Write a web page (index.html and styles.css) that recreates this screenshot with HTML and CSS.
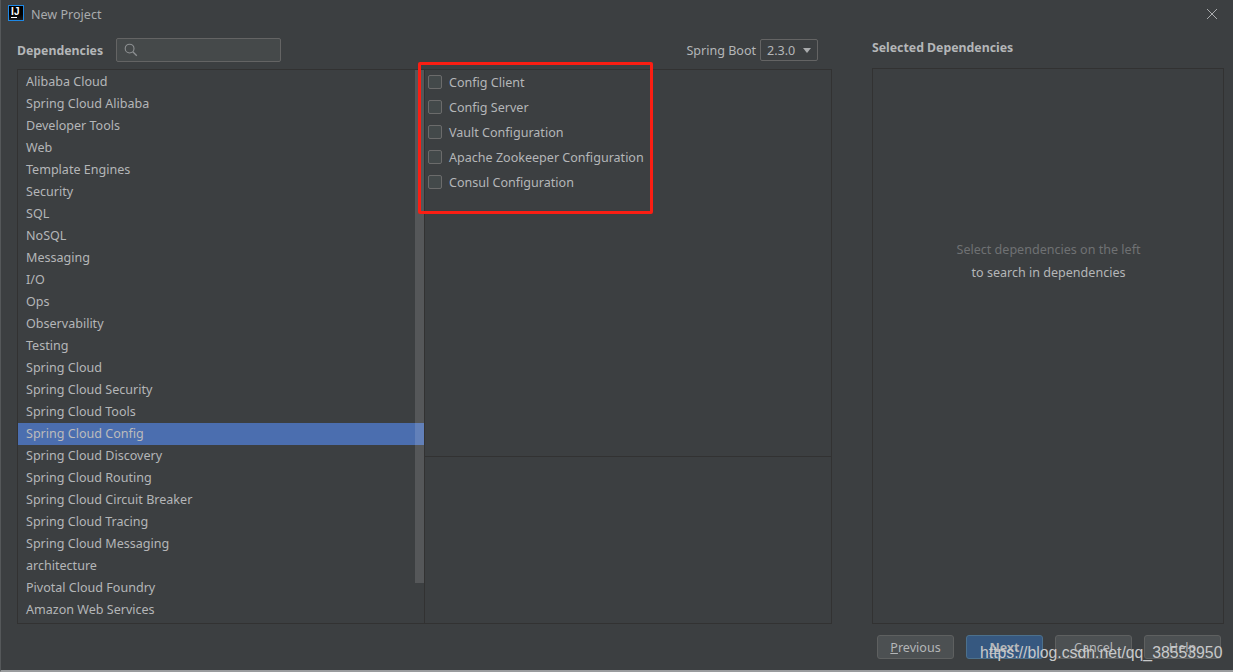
FILE: index.html
```html
<!DOCTYPE html>
<html lang="en">
<head>
<meta charset="utf-8">
<title>New Project</title>
<link rel="stylesheet" href="styles.css">
</head>
<body>
<div class="window">
  <header class="titlebar">
    <div class="logo"><span class="logo-text">IJ</span><span class="logo-bar"></span></div>
    <span class="title">New Project</span>
    <svg class="close" width="12" height="12" viewBox="0 0 12 12"><path d="M1 1l10 10M11 1L1 11" stroke="#a9abad" stroke-width="1" fill="none"/></svg>
  </header>
  <main class="content">
    <section class="left">
      <div class="toolbar">
        <strong class="heading deps-heading">Dependencies</strong>
        <div class="search">
          <svg width="14" height="14" viewBox="0 0 14 14"><circle cx="5.6" cy="5.6" r="4.4" stroke="#8d9092" stroke-width="1.1" fill="none"/><path d="M8.8 8.8l4 4" stroke="#8d9092" stroke-width="1.3" fill="none"/></svg>
        </div>
        <div class="boot">
          <span>Spring Boot</span>
          <div class="select"><span>2.3.0</span><i class="arrow"></i></div>
        </div>
      </div>
      <div class="panel">
        <div class="categories">
          <ul class="list">
            <li>Alibaba Cloud</li>
            <li>Spring Cloud Alibaba</li>
            <li>Developer Tools</li>
            <li>Web</li>
            <li>Template Engines</li>
            <li>Security</li>
            <li>SQL</li>
            <li>NoSQL</li>
            <li>Messaging</li>
            <li>I/O</li>
            <li>Ops</li>
            <li>Observability</li>
            <li>Testing</li>
            <li>Spring Cloud</li>
            <li>Spring Cloud Security</li>
            <li>Spring Cloud Tools</li>
            <li class="selected">Spring Cloud Config</li>
            <li>Spring Cloud Discovery</li>
            <li>Spring Cloud Routing</li>
            <li>Spring Cloud Circuit Breaker</li>
            <li>Spring Cloud Tracing</li>
            <li>Spring Cloud Messaging</li>
            <li>architecture</li>
            <li>Pivotal Cloud Foundry</li>
            <li>Amazon Web Services</li>
          </ul>
          <div class="scrollbar"></div>
        </div>
        <div class="detail">
          <div class="options">
            <label class="option"><i class="check"></i>Config Client</label>
            <label class="option"><i class="check"></i>Config Server</label>
            <label class="option"><i class="check"></i>Vault Configuration</label>
            <label class="option"><i class="check"></i>Apache Zookeeper Configuration</label>
            <label class="option"><i class="check"></i>Consul Configuration</label>
          </div>
          <div class="description"></div>
        </div>
      </div>
    </section>
    <aside class="right">
      <strong class="heading selected-heading">Selected Dependencies</strong>
      <div class="selected-panel">
        <p class="hint-dim">Select dependencies on the left</p>
        <p class="hint">to search in dependencies</p>
      </div>
      <footer class="buttons">
        <button class="btn"><span class="ul">P</span>revious</button>
        <button class="btn primary"><span class="ul">N</span>ext</button>
        <button class="btn">Cancel</button>
        <button class="btn">Help</button>
      </footer>
    </aside>
  </main>
</div>
<div class="annotation"></div>
<div class="watermark">https://blog.csdn.net/qq_38553950</div>
</body>
</html>
```
FILE: styles.css
```css
* { box-sizing: border-box; }
html, body { margin: 0; height: 100%; overflow: hidden; }
body {
  background: #3c3f41;
  color: #b4b6b8;
  font-family: "Noto Sans", "Open Sans", sans-serif;
  font-size: 12.55px;
  position: relative;
}
.window {
  width: 1233px;
  height: 672px;
  border-left: 1px solid #55585a;
  border-bottom: 2px solid #9a9c9e;
  display: flex;
  flex-direction: column;
}
.titlebar {
  height: 28px;
  display: flex;
  align-items: center;
  padding: 0 15px 0 7px;
}
.logo {
  width: 16px;
  height: 16px;
  margin-bottom: 2px;
  background: linear-gradient(#000 60%, #1a1a1a);
  border: 1px solid #1e88e5;
  color: #fff;
  margin-right: 7px;
}
.logo-text {
  display: block;
  font: bold 10px/9px "Liberation Sans", sans-serif;
  padding: 1px 0 0 2px;
  letter-spacing: 0.3px;
}
.logo-bar { display: block; width: 6px; height: 1px; background: #fff; margin: 1px 0 0 2px; }
.title { flex: 1; color: #a9abad; }
.content { flex: 1; display: flex; padding: 10px 9px 0 16px; min-height: 0; }
.left { width: 815px; display: flex; flex-direction: column; }
.toolbar { height: 31px; display: flex; align-items: center; padding-bottom: 7px; }
.heading { font-weight: 700; font-size: 12.3px; color: #b4b6b8; }
.deps-heading { width: 99px; }
.search {
  width: 165px;
  height: 24px;
  background: #45494a;
  border: 1px solid #646464;
  border-radius: 2px;
  display: flex;
  align-items: center;
  padding-left: 7px;
}
.boot { margin-left: auto; margin-right: 14px; display: flex; align-items: center; gap: 4px; }
.select {
  width: 58px;
  height: 22px;
  border: 1px solid #646464;
  border-radius: 2px;
  display: flex;
  align-items: center;
  padding-left: 6px;
  gap: 8px;
}
.arrow { width: 0; height: 0; border: 4.5px solid transparent; border-top: 5px solid #a9abad; border-bottom: 0; }
.panel { flex: 0 0 555px; display: flex; border: 1px solid #323232; }
.categories { width: 407px; border-right: 1px solid #323232; position: relative; }
.list { list-style: none; margin: 0; padding: 1px 0 0; }
.list li { height: 22px; line-height: 22px; padding-left: 8px; white-space: nowrap; }
.list li.selected { background: #4b6eaf; color: #bbbbbb; }
.scrollbar { position: absolute; right: 0; top: 0; width: 9px; height: 513px; background: rgba(255, 255, 255, 0.13); }
.detail { flex: 1; display: flex; flex-direction: column; }
.options { flex: 0 0 387px; border-bottom: 1px solid #323232; }
.option { display: flex; align-items: center; height: 25px; padding-left: 3px; }
.check {
  width: 14px;
  height: 14px;
  margin: 0 7px 2px 0;
  border: 1px solid #6b6b6b;
  border-radius: 2px;
  background: #43494a;
}
.description { flex: 1; }
.right { flex: 1; margin-left: 40px; display: flex; flex-direction: column; min-width: 0; }
.selected-heading { height: 30px; line-height: 20px; display: block; }
.selected-panel {
  height: 556px;
  border: 1px solid #323232;
  display: flex;
  flex-direction: column;
  align-items: center;
  padding: 169px 0 0 1px;
}
.selected-panel p { margin: 0; height: 23px; line-height: 23px; }
.hint-dim { color: #6f7173; }
.buttons { display: flex; gap: 12px; padding: 11px 2px 0 5px; }
.btn {
  width: 77px;
  height: 24px;
  padding: 0;
  font: inherit;
  color: #b4b6b8;
  background: #4c5052;
  border: 1px solid #5e6060;
  border-radius: 3px;
}
.btn.primary { background: #365880; border-color: #4c708c; font-weight: 700; }
.ul { text-decoration: underline; }
.annotation {
  position: absolute;
  left: 418px;
  top: 62px;
  width: 235px;
  height: 152px;
  border: 3px solid #fb1e13;
  border-radius: 2px;
}
.watermark {
  position: absolute;
  left: 980px;
  top: 642px;
  font: 15.8px/22px "Liberation Sans", sans-serif;
  color: #c8c9ca;
  white-space: nowrap;
}
```
